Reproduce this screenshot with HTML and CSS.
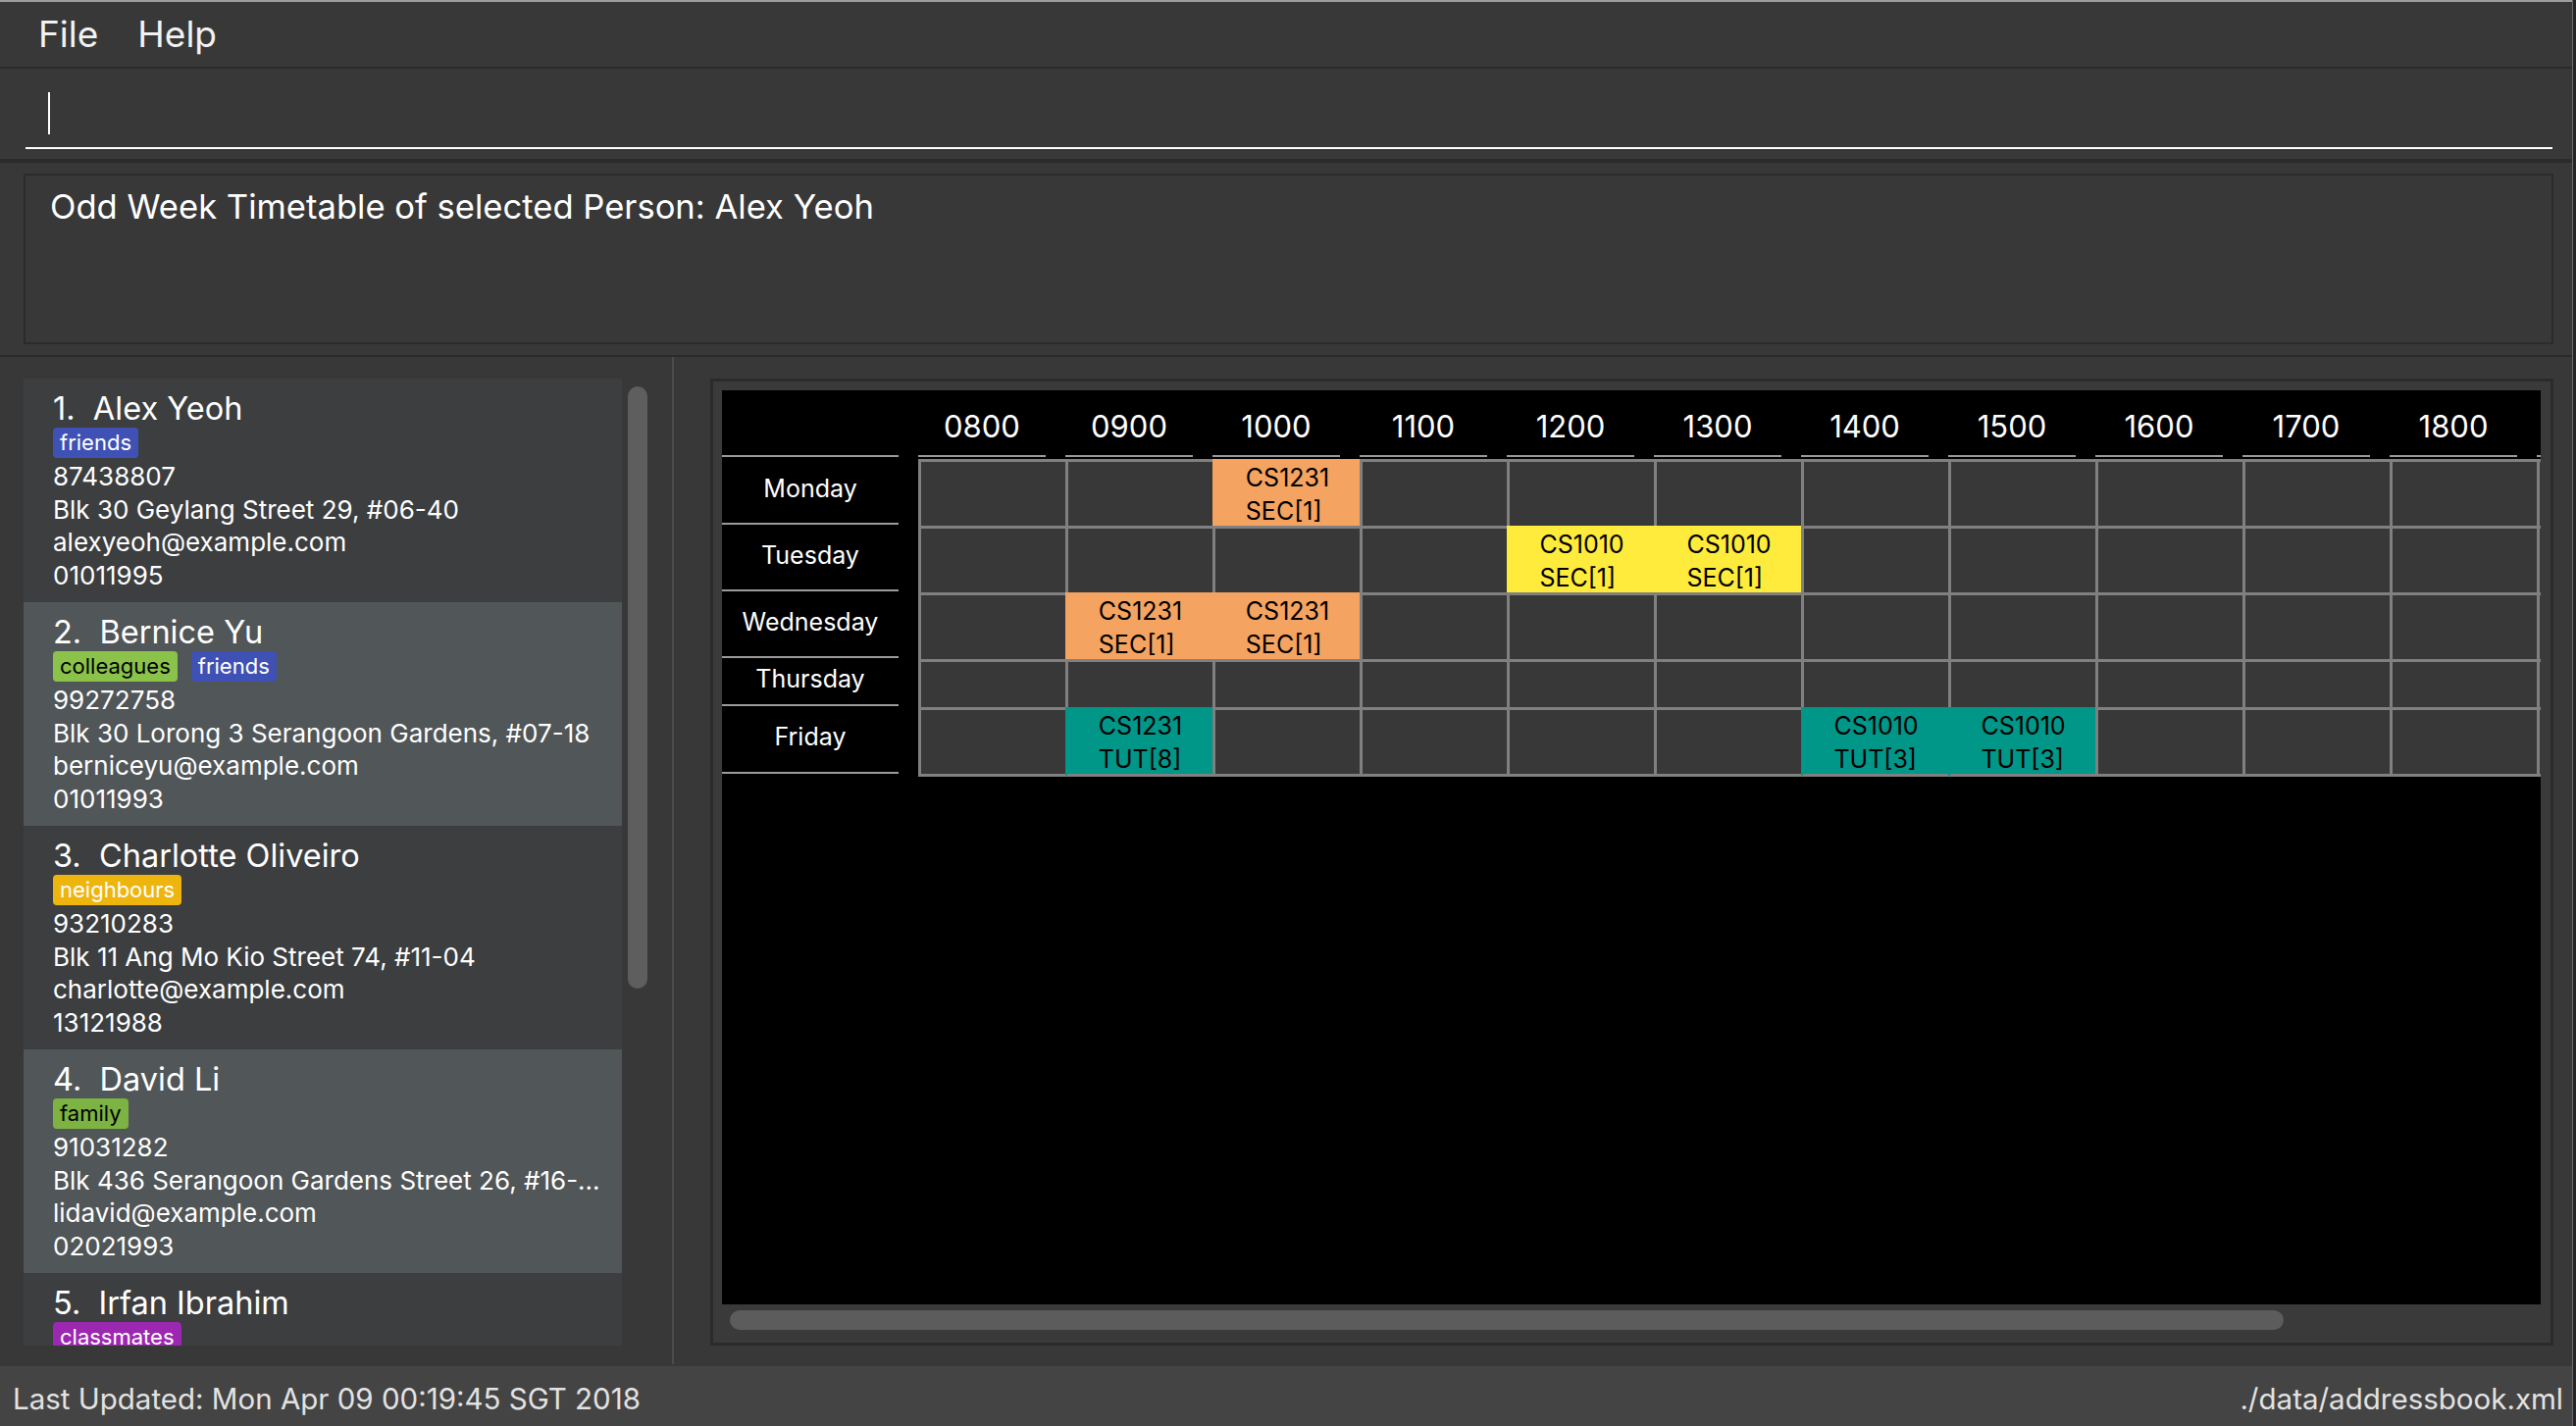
FILE: index.html
```html
<!DOCTYPE html>
<html>
<head>
<meta charset="utf-8">
<title>Address Book</title>
<link rel="stylesheet" href="styles.css">
</head>
<body>
<div class="window">
  <div class="menubar"><span class="menu-item">File</span><span class="menu-item">Help</span></div>
  <div class="sep sep-thin"></div>
  <div class="command"><div class="command-field"><span class="caret"></span></div></div>
  <div class="sep sep-thick"></div>
  <div class="result"><div class="result-box">Odd Week Timetable of selected Person: Alex Yeoh</div></div>
  <div class="sep sep-thin"></div>
  <div class="main">
    <div class="left">
      <div class="list">
        <div class="cards">
          <div class="card odd">
            <div class="name">1.&nbsp; Alex Yeoh</div>
            <div class="tags"><span class="tag friends">friends</span></div>
            <div class="details">
              <div>87438807</div>
              <div>Blk 30 Geylang Street 29, #06-40</div>
              <div>alexyeoh@example.com</div>
              <div>01011995</div>
            </div>
          </div>
          <div class="card even">
            <div class="name">2.&nbsp; Bernice Yu</div>
            <div class="tags"><span class="tag colleagues">colleagues</span><span class="tag friends">friends</span></div>
            <div class="details">
              <div>99272758</div>
              <div>Blk 30 Lorong 3 Serangoon Gardens, #07-18</div>
              <div>berniceyu@example.com</div>
              <div>01011993</div>
            </div>
          </div>
          <div class="card odd">
            <div class="name">3.&nbsp; Charlotte Oliveiro</div>
            <div class="tags"><span class="tag neighbours">neighbours</span></div>
            <div class="details">
              <div>93210283</div>
              <div>Blk 11 Ang Mo Kio Street 74, #11-04</div>
              <div>charlotte@example.com</div>
              <div>13121988</div>
            </div>
          </div>
          <div class="card even">
            <div class="name">4.&nbsp; David Li</div>
            <div class="tags"><span class="tag family">family</span></div>
            <div class="details">
              <div>91031282</div>
              <div>Blk 436 Serangoon Gardens Street 26, #16-...</div>
              <div>lidavid@example.com</div>
              <div>02021993</div>
            </div>
          </div>
          <div class="card odd last">
            <div class="name">5.&nbsp; Irfan Ibrahim</div>
            <div class="tags"><span class="tag classmates">classmates</span></div>
          </div>
        </div>
        <div class="vbar"><div class="vthumb"></div></div>
      </div>
    </div>
    <div class="divider"></div>
    <div class="right">
      <div class="frame">
        <div class="viewport">
          <div class="tt">
            <div class="th-day"></div>
            <div class="th">0800</div><div class="th">0900</div><div class="th">1000</div><div class="th">1100</div><div class="th">1200</div><div class="th">1300</div><div class="th">1400</div><div class="th">1500</div><div class="th">1600</div><div class="th">1700</div><div class="th">1800</div><div class="th"></div><div class="th"></div>

            <div class="day">Monday</div>
            <div class="c"></div><div class="c"></div><div class="c o"><div class="lbl">CS1231<br>SEC[1]</div></div><div class="c"></div><div class="c"></div><div class="c"></div><div class="c"></div><div class="c"></div><div class="c"></div><div class="c"></div><div class="c"></div><div class="c"></div><div class="c"></div>

            <div class="day">Tuesday</div>
            <div class="c"></div><div class="c"></div><div class="c"></div><div class="c"></div><div class="c y"><div class="lbl">CS1010<br>SEC[1]</div></div><div class="c y"><div class="lbl">CS1010<br>SEC[1]</div></div><div class="c"></div><div class="c"></div><div class="c"></div><div class="c"></div><div class="c"></div><div class="c"></div><div class="c"></div>

            <div class="day">Wednesday</div>
            <div class="c"></div><div class="c o"><div class="lbl">CS1231<br>SEC[1]</div></div><div class="c o"><div class="lbl">CS1231<br>SEC[1]</div></div><div class="c"></div><div class="c"></div><div class="c"></div><div class="c"></div><div class="c"></div><div class="c"></div><div class="c"></div><div class="c"></div><div class="c"></div><div class="c"></div>

            <div class="day">Thursday</div>
            <div class="c"></div><div class="c"></div><div class="c"></div><div class="c"></div><div class="c"></div><div class="c"></div><div class="c"></div><div class="c"></div><div class="c"></div><div class="c"></div><div class="c"></div><div class="c"></div><div class="c"></div>

            <div class="day fri">Friday</div>
            <div class="c b"></div><div class="c b t"><div class="lbl">CS1231<br>TUT[8]</div></div><div class="c b"></div><div class="c b"></div><div class="c b"></div><div class="c b"></div><div class="c b t"><div class="lbl">CS1010<br>TUT[3]</div></div><div class="c b t"><div class="lbl">CS1010<br>TUT[3]</div></div><div class="c b"></div><div class="c b"></div><div class="c b"></div><div class="c b"></div><div class="c b"></div>
          </div>
        </div>
        <div class="hbar"><div class="hthumb"></div></div>
      </div>
    </div>
  </div>
  <div class="status"><span>Last Updated: Mon Apr 09 00:19:45 SGT 2018</span><span>./data/addressbook.xml</span></div>
</div>
</body>
</html>
```
FILE: styles.css
```css
* { box-sizing: border-box; margin: 0; padding: 0; }
html, body { width: 2626px; height: 1454px; overflow: hidden; }
body { background: #262626; font-family: Inter, "Liberation Sans", sans-serif; color: #ffffff; }

.window {
  width: 2623px; height: 1454px; background: #383838;
  border-right: 1px solid #6a6a6a;
  display: flex; flex-direction: column;
}

.menubar {
  height: 68px; flex: none; border-top: 2px solid #9c9c9c;
  display: flex; align-items: center; padding-left: 19px;
  font-size: 37px; color: #f2f2f2;
}
.menu-item { padding: 0 20px; line-height: 44px; }

.sep { background: #2b2b2b; flex: none; }
.sep-thin { height: 2px; }
.sep-thick { height: 4px; }

.command { height: 92px; flex: none; padding: 0 20px 10px 26px; }
.command-field { height: 82px; border-bottom: 2px solid #ffffff; padding: 24px 0 0 23px; }
.caret { display: block; width: 2px; height: 43px; background: #ffffff; }

.result { height: 196px; flex: none; padding: 11px 19px 11px 24px; }
.result-box {
  height: 100%; border: 2px solid #2b2b2b; padding: 10px 25px;
  font-size: 34.6px; line-height: 42px; color: #ffffff;
}

.main { flex: 1; display: flex; min-height: 0; }

.left { width: 685px; flex: none; padding: 22px 25px 21px 24px; }
.list { height: 100%; display: flex; gap: 6px; }
.cards { width: 610px; flex: none; overflow: hidden; }
.card { height: 228px; padding: 12px 10px 11px 30px; overflow: hidden; }
.card.last { height: 74px; }
.card.odd { background: #3c3e3f; }
.card.even { background: #515658; }
.name { font-size: 32.5px; line-height: 38px; white-space: nowrap; color: #ffffff; }
.tags { display: flex; gap: 14px; height: 31px; }
.tag {
  height: 31px; padding: 0 7px; border-radius: 4px;
  font-size: 22px; line-height: 31px; white-space: nowrap;
}
.tag.friends { background: #3f51b5; color: #ffffff; }
.tag.colleagues { background: #8bc34a; color: #000000; }
.tag.neighbours { background: #efb50f; color: #ffffff; }
.tag.family { background: #7cb342; color: #000000; }
.tag.classmates { background: #9c27b0; color: #ffffff; }
.details { margin-top: 2px; font-size: 26px; line-height: 33.5px; white-space: nowrap; overflow: hidden; color: #ffffff; }

.vbar { width: 20px; flex: none; padding-top: 8px; }
.vthumb { height: 614px; background: #5e5e5e; border-radius: 10px; }

.divider { width: 2px; flex: none; background: #4b4b4b; margin-bottom: 2px; }

.right { flex: 1; min-width: 0; padding: 22px 19px 21px 37px; }
.frame {
  height: 100%; border: 3px solid #2b2b2b; background: #3a3a3a;
  display: flex; flex-direction: column; padding: 9px 10px 0 9px;
}
.viewport { flex: 1; min-height: 0; background: #000000; overflow: hidden; }
.hbar { height: 39px; flex: none; padding: 6px 0 0 8px; }
.hthumb { width: 1584px; height: 20px; background: #5c5c5c; border-radius: 10px; }

.tt {
  display: grid; width: 2150px;
  grid-template-columns: 200px repeat(13, 150px);
  grid-template-rows: 70px 68px 68px 68px 49px 71px;
}
.th-day { margin: 0 20px 2px 0; border-bottom: 2px solid #9a9a9a; }
.th {
  margin: 0 20px 2px 0; border-bottom: 2px solid #9a9a9a;
  display: flex; align-items: flex-end; justify-content: center;
  padding-bottom: 10px; font-size: 31px; line-height: 38px; color: #ffffff;
}
.day {
  margin: 0 20px 1px 0; border-bottom: 2px solid #9a9a9a;
  display: flex; align-items: center; justify-content: center;
  padding-bottom: 6px; font-size: 25px; color: #ffffff;
}
.day.fri { margin-bottom: 3px; }
.c {
  border-top: 3px solid #808080; border-left: 3px solid #808080;
  background: #383838;
  display: flex; align-items: center; justify-content: center;
  color: #000000; font-size: 25px; line-height: 34px;
}
.c.b { border-bottom: 3px solid #808080; }
.c.o { background: #f4a460; border-top-color: #f4a460; border-left-color: #f4a460; }
.c.y { background: #ffeb3b; border-top-color: #ffeb3b; border-left-color: #ffeb3b; }
.c.t { background: #009688; border-top-color: #009688; border-left-color: #009688; }
.lbl { text-align: left; white-space: nowrap; }

.status {
  height: 61px; flex: none; background: #444444;
  display: flex; justify-content: space-between; align-items: center;
  padding: 4px 9px 0 13px; font-size: 29.5px; color: #e2e2e2;
}
```
